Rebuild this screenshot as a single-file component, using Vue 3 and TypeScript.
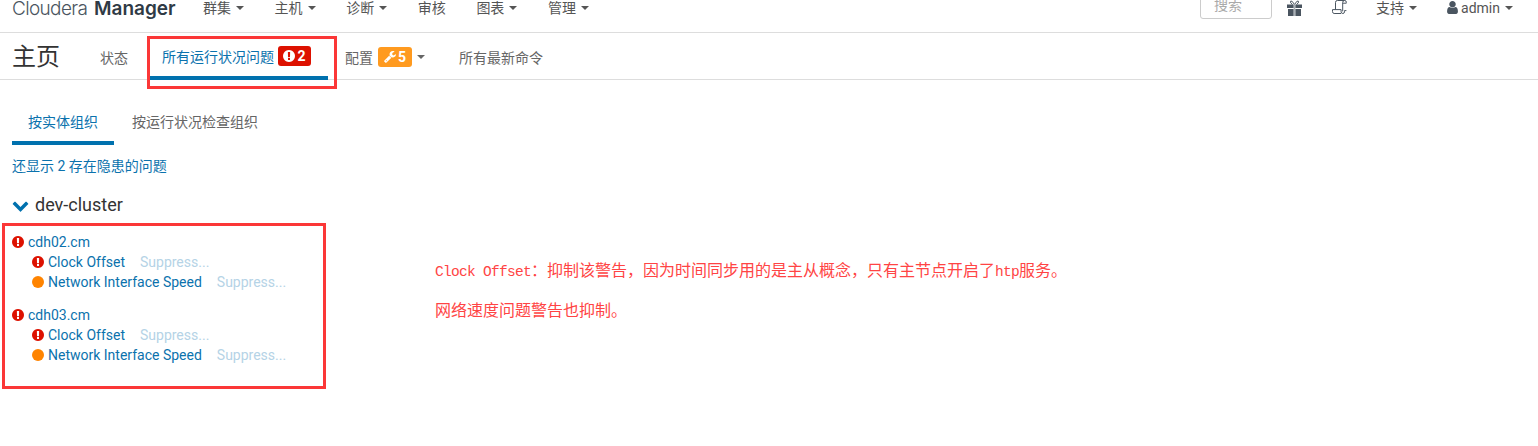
<script setup lang="ts">
const wrench = 'M448 1472q0-26-19-45t-45-19-45 19-19 45 19 45 45 19 45-19 19-45zm644-420l-682 682q-37 37-90 37-52 0-91-37l-106-108q-38-36-38-90 0-53 38-91l681-681q39 98 114.5 173.5t173.5 114.5zm634-435q0 39-23 106-47 134-164.5 217.5t-258.5 83.5q-185 0-316.5-131.5t-131.5-316.5 131.5-316.5 316.5-131.5q58 0 121.5 16.5t107.5 46.5q16 11 16 28t-16 28l-293 169v224l193 106q5-3 79-48.5t135.5-81 70.5-35.5q15 0 23.5 10t8.5 25z'
const user = 'M1536 1399q0 109-62.5 187t-150.5 78h-854q-88 0-150.5-78t-62.5-187q0-85 8.5-160.5t31.5-152 58.5-131 94-89 134.5-34.5q131 128 313 128t313-128q76 0 134.5 34.5t94 89 58.5 131 31.5 152 8.5 160.5zm-256-887q0 159-112.5 271.5t-271.5 112.5-271.5-112.5-112.5-271.5 112.5-271.5 271.5-112.5 271.5 112.5 112.5 271.5z'
const chevron = 'M1683 808l-742 741q-19 19-45 19t-45-19l-742-741q-19-19-19-45.5t19-45.5l166-165q19-19 45-19t45 19l531 531 531-531q19-19 45-19t45 19l166 165q19 19 19 45.5t-19 45.5z'
const alert = 'M896 128q209 0 385.5 103t279.5 279.5 103 385.5-103 385.5-279.5 279.5-385.5 103-385.5-103-279.5-279.5-103-385.5 103-385.5 279.5-279.5 385.5-103zm128 1247v-190q0-14-9-23.5t-22-9.5h-192q-13 0-23 10t-10 23v190q0 13 10 23t23 10h192q13 0 22-9.5t9-23.5zm-2-344l18-621q0-12-10-18-10-8-24-8h-220q-14 0-24 8-10 6-10 18l17 621q0 10 10 17.5t24 7.5h185q14 0 23.5-7.5t10.5-17.5z'

const navItems = [
  { label: '群集', caret: true },
  { label: '主机', caret: true },
  { label: '诊断', caret: true },
  { label: '审核', caret: false },
  { label: '图表', caret: true },
  { label: '管理', caret: true },
]

const hosts = ['cdh02.cm', 'cdh03.cm']
</script>

<template>
  <div class="page">
    <header class="navbar">
      <div class="logo"><span class="logo-light">Cloudera</span><b>Manager</b></div>
      <nav class="nav-main">
        <span v-for="item in navItems" :key="item.label" class="nav-item">
          {{ item.label }}<i v-if="item.caret" class="caret" />
        </span>
      </nav>
      <div class="nav-right">
        <div class="search">搜索</div>
        <svg class="gift" viewBox="0 0 15 16">
          <path class="gift-bow" d="M7.5 4.5 5 1.2H3.6v1.6L5.5 4.5M7.5 4.5 10 1.2h1.4v1.6L9.5 4.5" />
          <path d="M0 4.5h6.7V8H0zM8.3 4.5H15V8H8.3zM1 9h5.7v7H1zM8.3 9H14v7H8.3z" />
          <path class="gift-band" d="M6.7 4.5h1.6V16H6.7z" />
        </svg>
        <svg class="scroll" viewBox="0 0 15 15">
          <path d="M3.5 9.5V2.4A1.9 1.9 0 0 1 5.4.5h7.2a1.9 1.9 0 0 0-1.9 1.9v9" />
          <path d="M12.6.5a1.7 1.7 0 0 1 1.7 1.9v.8h-3.6" />
          <path d="M9 13.5H2.1a1.9 1.9 0 0 1-1.6-2V9.6h8.6v2.2a1.7 1.7 0 0 0 3.4 0v-1.2h1.9" />
        </svg>
        <span class="nav-item support">支持<i class="caret" /></span>
        <span class="nav-item account">
          <svg class="user" viewBox="256 128 1280 1536"><path :d="user" /></svg>admin<i class="caret" />
        </span>
      </div>
    </header>

    <section class="page-head">
      <h1>主页</h1>
      <div class="tabs">
        <span class="tab first">状态</span>
        <span class="tab active">
          所有运行状况问题
          <span class="badge red">
            <svg viewBox="128 128 1536 1536"><path :d="alert" fill-rule="evenodd" /></svg>2
          </span>
        </span>
        <span class="tab config">
          配置
          <span class="badge orange">
            <svg viewBox="64 128 1664 1664"><path :d="wrench" fill-rule="evenodd" /></svg>5
          </span>
          <i class="caret" />
        </span>
        <span class="tab last">所有最新命令</span>
      </div>
    </section>

    <main class="content">
      <div class="subtabs">
        <span class="subtab active">按实体组织</span>
        <span class="subtab">按运行状况检查组织</span>
      </div>
      <a class="also">还显示 2 存在隐患的问题</a>
      <h2 class="cluster">
        <svg viewBox="64 256 1664 1344"><path :d="chevron" /></svg>dev-cluster
      </h2>
      <div class="hosts">
        <div v-for="host in hosts" :key="host" class="host">
          <div class="row">
            <svg class="alert" viewBox="128 128 1536 1536"><path :d="alert" fill-rule="evenodd" /></svg>
            <a>{{ host }}</a>
          </div>
          <div class="row check">
            <svg class="alert" viewBox="128 128 1536 1536"><path :d="alert" fill-rule="evenodd" /></svg>
            <a>Clock Offset</a>
            <span class="suppress">Suppress...</span>
          </div>
          <div class="row check">
            <i class="dot" />
            <a>Network Interface Speed</a>
            <span class="suppress">Suppress...</span>
          </div>
        </div>
      </div>
    </main>

    <div class="mark mark-tab" />
    <div class="mark mark-hosts" />
    <div class="note note-one">
      <span class="mono">Clock Offset</span>：抑制该警告，因为时间同步用的是主从概念，只有主节点开启了<span class="mono">htp</span>服务。
    </div>
    <div class="note note-two">网络速度问题警告也抑制。</div>
  </div>
</template>

<style>
html,
body {
  margin: 0;
  background: #fff;
}
</style>

<style scoped>
.page {
  position: relative;
  width: 1538px;
  height: 446px;
  overflow: hidden;
  font-family: Roboto, "Noto Sans CJK SC", sans-serif;
  font-size: 14px;
  color: #555;
  background: #fff;
}

.navbar {
  display: flex;
  align-items: center;
  box-sizing: border-box;
  height: 33px;
  padding: 0 25px 17px 12px;
  border-bottom: 1px solid #ddd;
}

.logo {
  display: flex;
  width: 191px;
  flex: none;
  margin-top: 2px;
  font-family: Inter, Roboto, sans-serif;
  font-size: 19px;
  white-space: nowrap;
}

.logo-light {
  width: 82px;
  font-weight: 300;
  letter-spacing: -0.65px;
  color: #4a5560;
}

.logo b {
  font-weight: 600;
  color: #2f3a45;
}

.nav-main {
  display: flex;
  gap: 30.6px;
}

.nav-item {
  display: inline-flex;
  align-items: center;
  white-space: nowrap;
  font-size: 14px;
  line-height: 16px;
}

.caret {
  display: inline-block;
  width: 0;
  height: 0;
  margin-left: 5px;
  border-top: 4px solid #555;
  border-left: 4px solid transparent;
  border-right: 4px solid transparent;
}

.nav-right {
  display: flex;
  align-items: center;
  margin-left: auto;
}

.search {
  box-sizing: border-box;
  width: 72px;
  height: 30px;
  margin-top: -8px;
  padding: 7px 0 0 13px;
  border: 1px solid #ccc;
  border-radius: 3px;
  color: #aaa;
  font-size: 14px;
  line-height: 16px;
}

.gift {
  width: 15px;
  height: 16px;
  margin-left: 15px;
  fill: #4a5560;
}

.gift-bow {
  fill: none;
  stroke: #4a5560;
  stroke-width: 1;
}

.gift-band {
  fill: #a9b0b6;
}

.scroll {
  width: 15px;
  height: 15px;
  margin-left: 30px;
  fill: none;
  stroke: #4a5560;
  stroke-width: 1;
}

.support {
  margin-left: 29px;
}

.account {
  margin-left: 30px;
}

.user {
  width: 11px;
  height: 13px;
  margin-right: 3px;
  fill: #4a5560;
}

.page-head {
  display: flex;
  box-sizing: border-box;
  height: 47px;
  padding-left: 12px;
  border-bottom: 1px solid #ddd;
}

h1 {
  width: 88px;
  margin: 0;
  font-size: 24px;
  font-weight: 400;
  line-height: 48px;
  color: #333;
}

.tabs {
  display: flex;
  height: 46px;
  margin-bottom: -1px;
}

.tab {
  display: flex;
  align-items: center;
  box-sizing: border-box;
  height: 47px;
  white-space: nowrap;
  font-size: 14px;
  color: #666;
}

.tab.first {
  width: 48px;
}

.tab.active {
  width: 180px;
  padding-left: 14px;
  color: #0b72ad;
  border-bottom: 4px solid #0071ae;
  padding-top: 3px;
}

.tab.config {
  width: 131px;
  padding-left: 17px;
}

.badge {
  display: inline-flex;
  align-items: center;
  justify-content: center;
  height: 20px;
  margin-left: 4px;
  border-radius: 3px;
  color: #fff;
  font-size: 14px;
  font-weight: 700;
}

.badge svg {
  width: 12px;
  height: 12px;
  margin-right: 2px;
  fill: #fff;
}

.badge.red {
  width: 33px;
  background: #dd1100;
}

.badge.orange {
  width: 34px;
  margin-left: 5px;
  background: #ff9a1f;
}

.tab.config .caret {
  margin-left: 5px;
  border-top-color: #666;
}

.content {
  padding: 0 12px;
}

.subtabs {
  display: flex;
  height: 65px;
  box-sizing: border-box;
}

.subtab {
  display: flex;
  align-items: center;
  box-sizing: border-box;
  height: 65px;
  padding: 20px 16px 0;
  margin-right: 2px;
  border-bottom: 4px solid transparent;
  font-size: 14px;
  color: #666;
}

.subtab.active {
  width: 102px;
  color: #0b72ad;
  border-bottom-color: #0071ae;
}

.also {
  display: block;
  margin-top: 13px;
  font-size: 14px;
  line-height: 16px;
  color: #0b72ad;
  text-decoration: none;
}

.cluster {
  display: flex;
  align-items: center;
  margin: 19px 0 0;
  font-size: 18px;
  font-weight: 400;
  line-height: 24px;
  color: #333;
}

.cluster svg {
  width: 17px;
  height: 13px;
  margin-right: 6px;
  fill: #0071ae;
}

.hosts {
  margin-top: 15px;
}

.host {
  margin-bottom: 13px;
}

.row {
  display: flex;
  align-items: center;
  height: 20px;
  font-size: 14px;
  color: #0b72ad;
}

.row.check {
  padding-left: 20px;
}

.alert {
  flex: none;
  width: 12px;
  height: 12px;
  margin-right: 4px;
  fill: #dd1100;
}

.dot {
  flex: none;
  width: 12px;
  height: 12px;
  margin-right: 4px;
  border-radius: 50%;
  background: #ff8400;
}

.suppress {
  margin-left: 15px;
  color: #b5d3e6;
}

.mark {
  position: absolute;
  box-sizing: border-box;
  border: 3px solid #fb3737;
}

.mark-tab {
  left: 147px;
  top: 36px;
  width: 190px;
  height: 53px;
}

.mark-hosts {
  left: 2px;
  top: 223px;
  width: 324px;
  height: 166px;
}

.note {
  position: absolute;
  left: 435px;
  white-space: nowrap;
  font-size: 16px;
  line-height: 20px;
  color: #f44;
}

.note-one {
  top: 261px;
}

.note-two {
  top: 301px;
}

.mono {
  font-family: "Liberation Mono", monospace;
  font-size: 14.5px;
  letter-spacing: -0.7px;
}
</style>
